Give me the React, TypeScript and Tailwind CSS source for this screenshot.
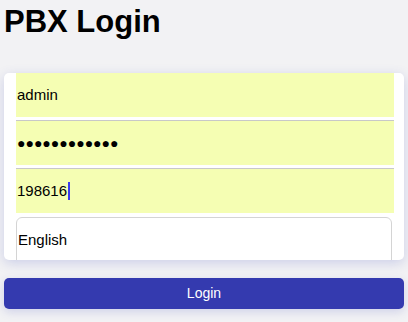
export default function App() {
  return (
    <div
      className="h-[322px] w-[408px] overflow-hidden bg-[#f2f2f4] px-1 text-black"
      style={{ fontFamily: '"Liberation Sans", Arial, sans-serif' }}
    >
      <h1 className="pt-[3px] text-[31px] font-bold leading-[37px]">PBX Login</h1>
      <form className="mt-[33px]">
        <div className="h-[187px] overflow-hidden rounded-[5px] bg-white pl-3 pr-[10px] shadow-[0_3px_12px_rgba(70,80,190,0.22)]">
          <div className="-mt-px flex flex-col gap-[3px]">
            <div className="flex h-[45px] items-center border-t border-[#c8c8c8] bg-[#f5feb3] px-px text-[15px]">
              admin
            </div>
            <div className="flex h-[45px] items-center border-t border-[#c8c8c8] bg-[#f5feb3] px-px text-[14px]">
              ●●●●●●●●●●●●
            </div>
            <div className="flex h-[45px] items-center border-t border-[#c8c8c8] bg-[#f5feb3] px-px text-[15px]">
              198616
              <span className="ml-px inline-block h-[18px] w-[2px] bg-[#3b3bf0]" />
            </div>
          </div>
          <div className="mt-[4px] mr-[2px] flex h-[50px] items-start rounded-[6px] border border-[#d4d4d4] px-px pt-[11px] text-[15px]">
            English
          </div>
        </div>
        <button
          type="button"
          className="mt-[18px] h-[31px] w-full rounded-[5px] bg-[#343aaf] text-[14px] text-white shadow-[0_3px_10px_rgba(70,80,190,0.2)]"
        >
          Login
        </button>
      </form>
    </div>
  );
}
